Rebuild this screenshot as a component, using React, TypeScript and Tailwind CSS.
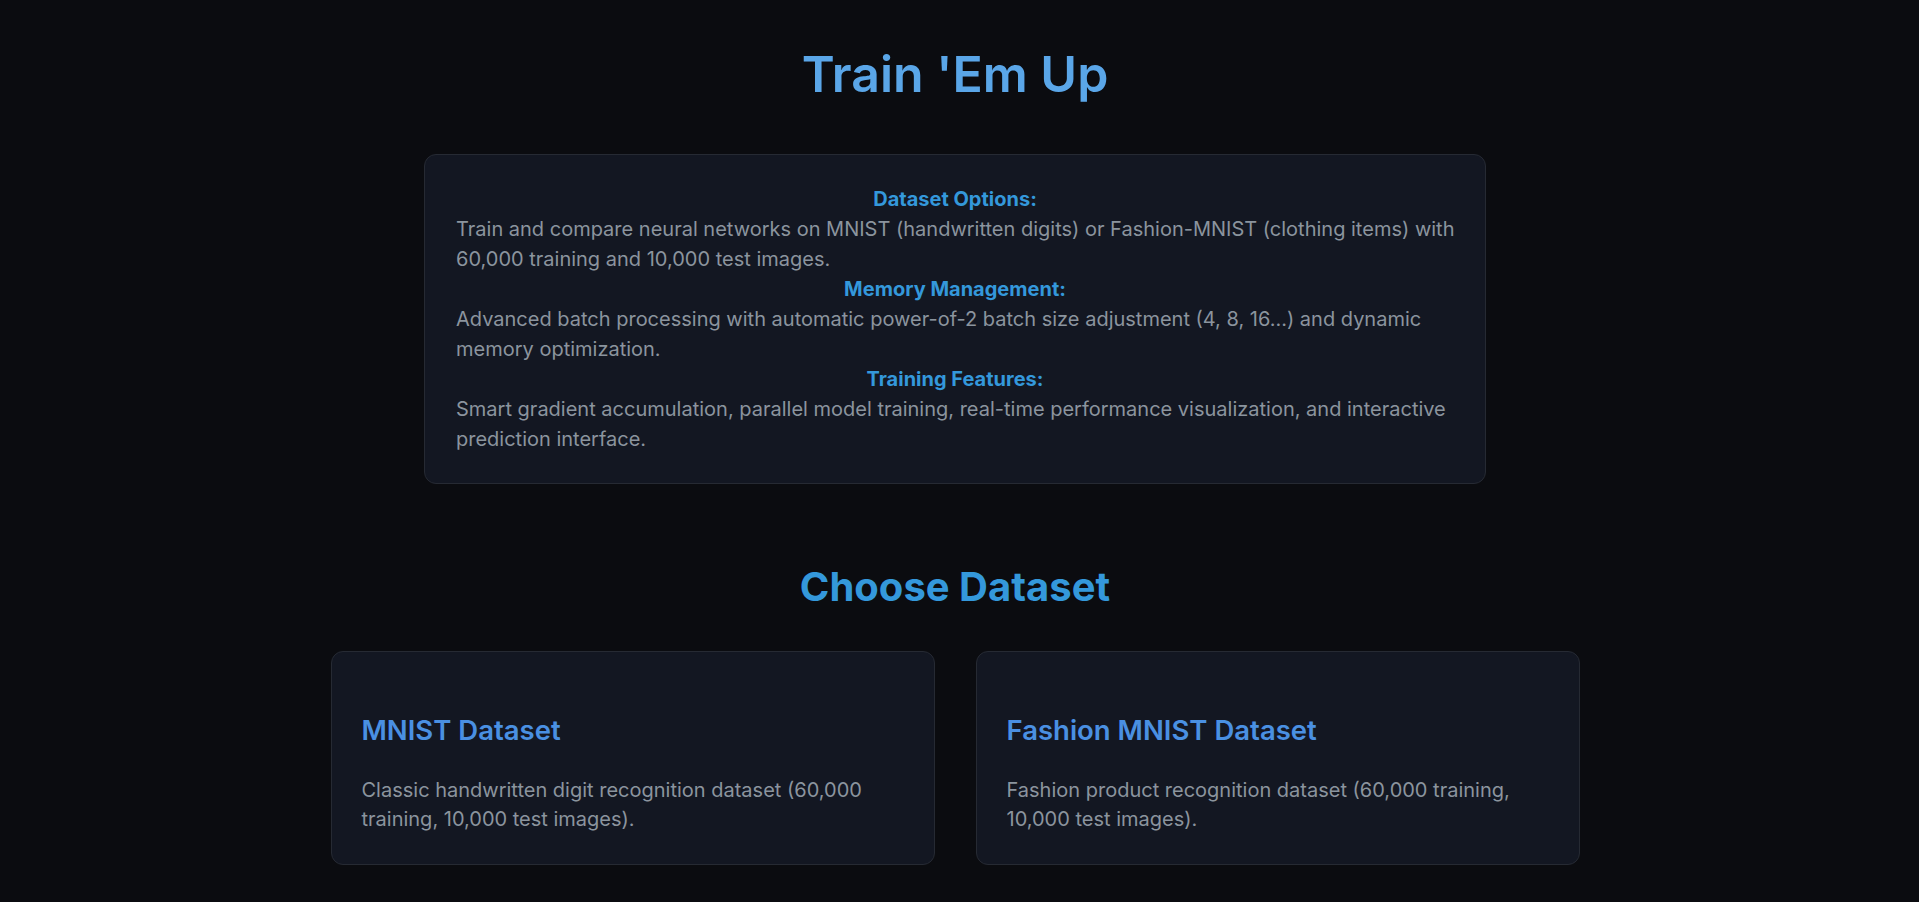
const sections = [
  {
    title: "Dataset Options:",
    body: "Train and compare neural networks on MNIST (handwritten digits) or Fashion-MNIST (clothing items) with 60,000 training and 10,000 test images.",
  },
  {
    title: "Memory Management:",
    body: "Advanced batch processing with automatic power-of-2 batch size adjustment (4, 8, 16...) and dynamic memory optimization.",
  },
  {
    title: "Training Features:",
    body: "Smart gradient accumulation, parallel model training, real-time performance visualization, and interactive prediction interface.",
  },
];

const datasets = [
  {
    name: "MNIST Dataset",
    desc: "Classic handwritten digit recognition dataset (60,000 training, 10,000 test images).",
  },
  {
    name: "Fashion MNIST Dataset",
    desc: "Fashion product recognition dataset (60,000 training, 10,000 test images).",
  },
];

const App = () => {
  return (
    <div className="min-h-screen bg-[#0b0c10] font-['Inter','Noto_Sans',sans-serif]">
      <div className="flex flex-col items-center pr-[9px]">
        {/* Header */}
        <h1 className="mt-[44px] text-[50px] leading-[1.2] font-semibold text-[#5aa6e8]">Train 'Em Up</h1>

        {/* Info box */}
        <div className="mt-[50px] w-[1062px] rounded-xl border border-[#262a33] bg-[#131722] pl-[31px] pr-[26px] py-[29px] text-[20px] leading-[30px] text-[#8b949e]">
          {sections.map((s) => (
            <div key={s.title}>
              <h3 className="pr-[5px] text-center font-bold text-[#3498db]">{s.title}</h3>
              <p>{s.body}</p>
            </div>
          ))}
        </div>

        {/* Dataset picker */}
        <h2 className="mt-[79px] text-[40px] leading-[1.2] font-bold text-[#3498db]">Choose Dataset</h2>
        <div className="mt-[40px] grid w-[1249px] grid-cols-2 gap-[41px]">
          {datasets.map((d) => (
            <div
              key={d.name}
              className="rounded-xl border border-[#262a33] bg-[#131722] p-[30px] cursor-pointer"
            >
              <h3 className="mt-[31px] text-[27.5px] leading-[1.3] font-semibold text-[#4a90e2]">{d.name}</h3>
              <p className="mt-[27px] text-[20px] leading-[29px] text-[#8b949e]">{d.desc}</p>
            </div>
          ))}
        </div>
      </div>
    </div>
  );
};

export default App;
